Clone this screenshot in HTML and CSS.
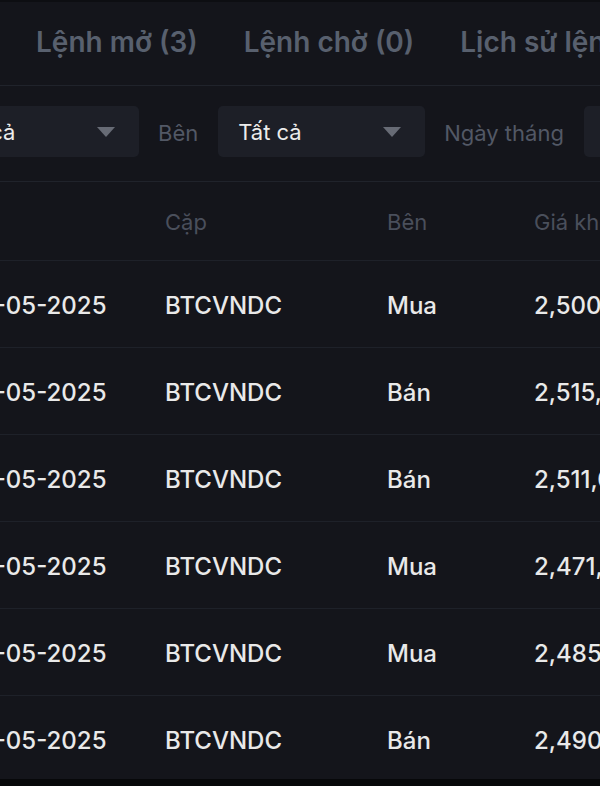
FILE: index.html
```html
<!DOCTYPE html>
<html lang="vi">
<head>
<meta charset="utf-8">
<link rel="stylesheet" href="styles.css">
</head>
<body>
<div class="app">
  <div class="tabs">
    <div class="tab">Lệnh mở (3)</div>
    <div class="tab">Lệnh chờ (0)</div>
    <div class="tab">Lịch sử lệnh</div>
  </div>
  <div class="filters">
    <div class="select"><span>Tất cả</span><i class="caret"></i></div>
    <div class="label">Bên</div>
    <div class="select"><span>Tất cả</span><i class="caret"></i></div>
    <div class="label">Ngày tháng</div>
    <div class="select date"></div>
  </div>
  <div class="table">
    <div class="row head">
      <div></div><div>Cặp</div><div>Bên</div><div>Giá khớp</div>
    </div>
    <div class="row"><div>12-05-2025</div><div>BTCVNDC</div><div>Mua</div><div>2,500,000,000</div></div>
    <div class="row"><div>12-05-2025</div><div>BTCVNDC</div><div>Bán</div><div>2,515,000,000</div></div>
    <div class="row"><div>12-05-2025</div><div>BTCVNDC</div><div>Bán</div><div>2,511,000,000</div></div>
    <div class="row"><div>12-05-2025</div><div>BTCVNDC</div><div>Mua</div><div>2,471,000,000</div></div>
    <div class="row"><div>12-05-2025</div><div>BTCVNDC</div><div>Mua</div><div>2,485,000,000</div></div>
    <div class="row last"><div>12-05-2025</div><div>BTCVNDC</div><div>Bán</div><div>2,490,000,000</div></div>
  </div>
</div>
</body>
</html>
```
FILE: styles.css
```css
html, body {
  margin: 0;
  padding: 0;
  background: #ffffff;
  overflow: hidden;
  width: 600px;
  height: 800px;
}
.app {
  width: 600px;
  height: 777px;
  background: #14151b;
  border-top: 2px solid #0d0e12;
  border-bottom: 7px solid #07080a;
  font-family: Inter, "Noto Sans", sans-serif;
  overflow: hidden;
}
.tabs {
  display: flex;
  gap: 46px;
  padding-left: 36px;
  box-sizing: border-box;
  padding-bottom: 3px;
  height: 84px;
  align-items: center;
  border-bottom: 1px solid #20232b;
  white-space: nowrap;
}
.tab {
  font-size: 28px;
  font-weight: 600;
  color: #58606e;
}
.filters {
  display: flex;
  align-items: center;
  margin-left: -68px;
  height: 96px;
  box-sizing: border-box;
  padding-bottom: 5px;
  border-bottom: 1px solid #20232b;
  white-space: nowrap;
}
.select {
  flex: none;
  width: 207px;
  height: 51px;
  box-sizing: border-box;
  background: #1d1f27;
  border-radius: 5px;
  display: flex;
  align-items: center;
  justify-content: space-between;
  padding: 2px 24px 0 20px;
  font-size: 22px;
  color: #ececec;
}
.select.date {
  width: 120px;
}
.caret {
  width: 0;
  height: 0;
  border-left: 9px solid transparent;
  border-right: 9px solid transparent;
  border-top: 10px solid #676b75;
}
.label {
  font-size: 22px;
  color: #525865;
  padding: 3px 20px 0 19px;
}
.table {
  margin-left: -30px;
}
.row {
  display: grid;
  grid-template-columns: 195px 222px 147px 1fr;
  height: 87px;
  box-sizing: border-box;
  align-items: center;
  border-bottom: 1px solid #1e2129;
  font-size: 24px;
  font-weight: 500;
  color: #e9e9e9;
  white-space: nowrap;
}
.row > div {
  padding-top: 2px;
}
.row.head {
  height: 79px;
  color: #4a4f5b;
  font-weight: 400;
  font-size: 22px;
}
.row.last {
  border-bottom: none;
}
```
